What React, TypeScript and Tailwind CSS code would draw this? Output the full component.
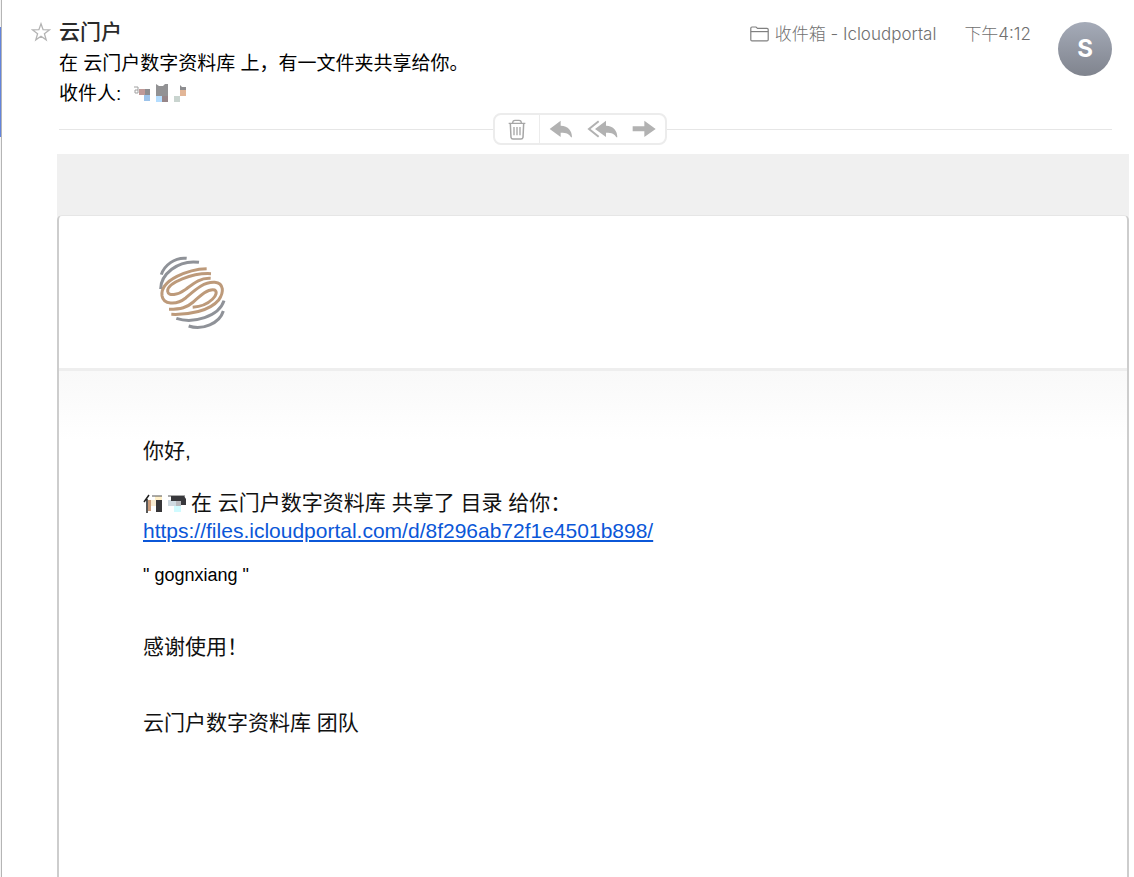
import React from "react";

const cjk = "font-['Liberation_Sans','Noto_Sans_CJK_SC',sans-serif]";

function StarIcon() {
    return (
        <svg width="20" height="20" viewBox="0 0 20 20" fill="none" stroke="#b4b4b4" strokeWidth="1.3" aria-hidden="true">
            <path d="M10 1.8 L12.1 7.7 L18.4 7.9 L13.4 11.7 L15.2 17.8 L10 14.2 L4.8 17.8 L6.6 11.7 L1.6 7.9 L7.9 7.7 Z" />
        </svg>
    );
}

function FolderIcon() {
    return (
        <svg width="19" height="16" viewBox="0 0 19 16" fill="none" stroke="#808080" strokeWidth="1.2" aria-hidden="true">
            <path d="M0.8 13.7 V2.2 Q0.8 1 2 1 H6 L7.6 2.4 H17 Q18.2 2.4 18.2 3.6 V13.7 Q18.2 14.9 17 14.9 H2 Q0.8 14.9 0.8 13.7 Z" />
            <path d="M0.8 5.6 H18.2" />
        </svg>
    );
}

function TrashIcon() {
    return (
        <svg width="18" height="21" viewBox="80 54 54 63" fill="none" stroke="#a6a6a6" aria-hidden="true">
            <path d="M82 67 H132" strokeWidth="4" />
            <path d="M94 66 Q94 58 101 58 H113 Q120 58 120 66" strokeWidth="4" />
            <path d="M87 68 L89 109 Q90 114 95 114 H119 Q124 114 125 109 L127 68" strokeWidth="4.5" />
            <path d="M98 78 V103 M107 78 V103 M116 78 V103" strokeWidth="4" />
        </svg>
    );
}

function ReplyIcon() {
    return (
        <svg width="24" height="18" viewBox="206 60 72 54" fill="#b2b2b2" aria-hidden="true">
            <path d="M208 87 L241 62 V77 C264 78 275 92 275 112 H272 C267 102 259 98 241 98 V111 Z" />
        </svg>
    );
}

function ReplyAllIcon() {
    return (
        <svg width="31" height="18" viewBox="321 60 93 54" fill="#b2b2b2" aria-hidden="true">
            <path d="M345 87 L378 62 V77 C401 78 412 92 412 112 H409 C404 102 396 98 378 98 V111 Z" />
            <path d="M356 64 L327 87 L356 110" fill="none" stroke="#b2b2b2" strokeWidth="6" />
        </svg>
    );
}

function ForwardIcon() {
    return (
        <svg width="24" height="18" viewBox="457 60 72 54" fill="#b2b2b2" aria-hidden="true">
            <path d="M459 79 H494 V62 L528 87 L494 111 V94 H459 Z" />
        </svg>
    );
}

function BrandLogo() {
    return (
        <svg width="70" height="75" viewBox="85 45 210 225" fill="none" strokeLinecap="butt" role="img" aria-label="Logo">
            <g stroke="#8f9298" strokeWidth="9">
                <path d="M95 104 C103 77 135 51 171 55" />
                <path d="M93 147 C93 105 143 58 208 67" />
                <path d="M140 235 C190 252 268 230 283 182" />
                <path d="M177 258 C218 272 270 250 281 213" />
            </g>
            <g stroke="#bd9a7a" strokeWidth="9">
                <path d="M231 86 C178 87 91 120 97 167 C101 193 139 197 168 174 C196 150 222 125 255 127 C284 130 283 158 267 180 C240 213 178 225 125 223" />
                <path d="M244 101 C190 98 112 128 114 154 C116 170 145 165 168 148 C192 130 211 113 243 115" />
                <path d="M118 208 C155 208 171 203 191 186 C213 166 236 145 255 150 C271 159 243 198 189 202" />
            </g>
        </svg>
    );
}

function RecipientBlur() {
    return (
        <svg width="56" height="20" viewBox="0 0 56 20" role="img" aria-label="收件人">
            <path d="M1 3 H5 V9 H2 V6 H5" fill="none" stroke="#a0a0a0" />
            <path d="M6 5 h6 v6 h-6z" fill="#c09a98" />
            <path d="M12 5 h5 v6 h-5z" fill="#8d8d90" />
            <path d="M11 11 h6 v6 h-6z" fill="#9cc3ea" />
            <path d="M23 0 l3 2 h4 l2 -2 h3 v12 h-12z" fill="#929294" />
            <path d="M23 12 h6 v6 h-6z" fill="#b4ddff" />
            <path d="M29 12 h6 v6 h-6z" fill="#968689" />
            <path d="M47 1 l2 2 h4 v3 h-6z" fill="#8d8d90" />
            <path d="M47 6 h6 v6 h-6z" fill="#e2b697" />
            <path d="M41 12 h6 v6 h-6z" fill="#c9d4cf" />
        </svg>
    );
}

function SenderBlur() {
    return (
        <svg className="inline-block align-middle" width="48" height="22" viewBox="0 0 48 22" role="img" aria-label="发件人">
            <path d="M6 2 L1 9 M4 6 V20" fill="none" stroke="#222" strokeWidth="1.5" />
            <path d="M5 7 h3 v11 h-3z" fill="#c99a78" />
            <path d="M8 7 h5 v6 h-5z" fill="#f8ead0" />
            <path d="M12 3 h7 v4 h-7z" fill="#fff0ca" />
            <path d="M13 7 h6 v12 h-6z" fill="#373638" />
            <path d="M9 3 H19 M25 3 H42" fill="none" stroke="#555" />
            <path d="M25 7 h8 v6 h-8z" fill="#d0dbe2" />
            <path d="M28 3 h13 l2 3 v6 h-5 v-4 h-10z" fill="#38383c" />
            <path d="M33 8 h5 v5 h-5z" fill="#b9b9bd" />
            <path d="M31 13 h7 v6 h-7z" fill="#d0fbff" />
        </svg>
    );
}

function MessageHeader() {
    return (
        <header className="flex items-start pl-[29px] pr-[22px]">
            <div className="flex-1 flex items-start gap-2">
                <button type="button" aria-label="star" className="mt-[22px]">
                    <StarIcon />
                </button>
                <div className="pt-[17px]">
                    <h1 className="text-[21px] leading-[30px] font-medium text-[#2a2a2a]">云门户</h1>
                    <p className="mt-0.5 text-[19px] leading-[30px] text-black">在 云门户数字资料库 上，有一文件夹共享给你。</p>
                    <div className="flex items-center gap-3 text-[19px] leading-[30px] text-black">
                        <span>收件人:</span>
                        <RecipientBlur />
                    </div>
                </div>
            </div>
            <div className="flex items-center gap-7 pt-[22px] text-[17px] leading-6 text-[#707070] font-light font-['Inter','Noto_Sans_CJK_SC',sans-serif]">
                <span className="flex items-center gap-1.5">
                    <FolderIcon />
                    收件箱 - Icloudportal
                </span>
                <time>下午4:12</time>
            </div>
            <div className="ml-[27px] mt-[22px] size-[54px] rounded-full bg-linear-to-b from-[#a5abb8] to-[#80848e] flex items-center justify-center text-white text-[24px] font-bold font-['Inter',sans-serif]">
                S
            </div>
        </header>
    );
}

function MessageToolbar() {
    return (
        <div className="mt-[4px] pl-[57px] pr-[22px] grid grid-cols-[434fr_auto_446fr] items-center">
            <hr className="border-t border-[#e6e6e6]" />
            <div className="flex h-8 border-2 border-[#ececec] rounded-lg overflow-hidden bg-white">
                <button type="button" aria-label="删除" className="w-[45px] flex items-center justify-center border-r border-[#ececec]">
                    <TrashIcon />
                </button>
                <button type="button" aria-label="回复" className="w-[42px] flex items-center justify-center">
                    <ReplyIcon />
                </button>
                <button type="button" aria-label="全部回复" className="w-[42px] flex items-center justify-center">
                    <ReplyAllIcon />
                </button>
                <button type="button" aria-label="转发" className="w-[41px] flex items-center justify-center">
                    <ForwardIcon />
                </button>
            </div>
            <hr className="border-t border-[#e6e6e6]" />
        </div>
    );
}

function MessageBody() {
    return (
        <article className="flex-1 flex flex-col mt-[9px] ml-[55px] mr-[5px]">
            <div className="h-[61px] bg-[#f0f0f0]" />
            <div className="bg-linear-to-b from-[#f0f0f0] from-0% to-white to-1% flex-1 flex flex-col">
                <div className="flex-1 rounded-t-[5px] border-x-2 border-t border-x-[#cdcdcd] border-t-[#e6e6e6] bg-white">
                    <div className="h-[155px] pl-[99px] pt-[39px] border-b-[3px] border-[#eeeeee]">
                        <BrandLogo />
                    </div>
                    <div className="px-[84px] pt-[66px] bg-linear-to-b from-[#f9f9f9] to-white to-[70px] text-[21px] leading-7 text-[#111]">
                        <p>你好,</p>
                        <p className="mt-6">
                            <SenderBlur />
                            在 云门户数字资料库 共享了 目录 给你：
                        </p>
                        <p>
                            <a href="#" className="text-[#0b57d8] underline underline-offset-2">
                                https://files.icloudportal.com/d/8f296ab72f1e4501b898/
                            </a>
                        </p>
                        <p className="mt-[18px] text-[18px] leading-6 text-black">" gognxiang "</p>
                        <p className="mt-[46px]">感谢使用！</p>
                        <p className="mt-12">云门户数字资料库 团队</p>
                    </div>
                </div>
            </div>
        </article>
    );
}

export default function App() {
    return (
        <div className={`flex min-h-screen bg-white ${cjk}`}>
            <aside className="w-0.5 border-r border-[#b5b5b5] bg-[#f4f4f4]">
                <div className="mt-[27px] h-[110px] bg-[#6384dc]" />
            </aside>
            <main className="flex-1 min-w-0 flex flex-col">
                <MessageHeader />
                <MessageToolbar />
                <MessageBody />
            </main>
        </div>
    );
}
